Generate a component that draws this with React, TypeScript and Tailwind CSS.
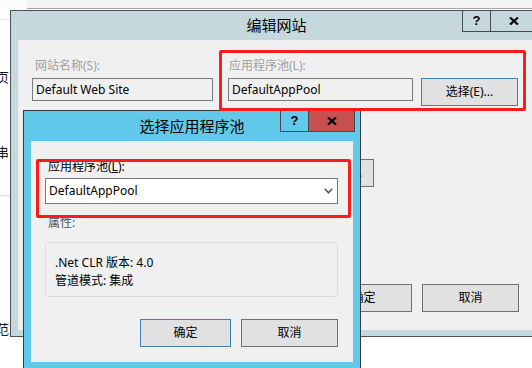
import type { ReactNode } from "react";

const FONT = "font-['Noto_Sans','Noto_Sans_CJK_SC',sans-serif]";

function WinButton({
  children,
  primary,
  className,
}: {
  children?: ReactNode;
  primary?: boolean;
  className?: string;
}) {
  return (
    <div
      className={
        "flex items-center justify-center border bg-[#e1e1e1] text-[12px] text-black " +
        (primary ? "border-[#3c7fb1] " : "border-[#707070] ") +
        (className ?? "")
      }
    >
      {children}
    </div>
  );
}

function CloseGlyph() {
  return (
    <svg width="10" height="8" viewBox="0 0 10 8">
      <path d="M1 0.5 L9 7.5 M9 0.5 L1 7.5" stroke="#000" strokeWidth="2.2" />
    </svg>
  );
}

function CaptionButtons({ red }: { red?: boolean }) {
  return (
    <div className="absolute top-[-1px] right-[5px] flex h-[22px]">
      <div className="flex w-[29px] items-center justify-center border border-t-0 border-[#4a4a4a] font-['Liberation_Sans',sans-serif] text-[13px] font-bold text-black">
        ?
      </div>
      <div
        className={
          "flex w-[46px] items-center justify-center border border-t-0 border-l-0 border-[#4a4a4a] " +
          (red ? "bg-[#c75050]" : "")
        }
      >
        <CloseGlyph />
      </div>
    </div>
  );
}

export default function App() {
  return (
    <div className={"relative h-[368px] w-[532px] overflow-hidden bg-white " + FONT}>
      {/* page behind the dialogs */}
      <div className="flex h-[9px]">
        <div className="w-[27px] bg-[#fbfbfb]" />
        <div className="flex-1 border-b border-[#a6a6a6] bg-[#f3f3f3]" />
      </div>
      <div className="flex w-[10px] flex-col overflow-hidden text-[13px] leading-[16px] text-[#1a1a1a]">
        <div className="mt-[10px] h-px bg-[#dde7eb]" />
        <div className="mt-[49px] -ml-[4px] whitespace-nowrap">页</div>
        <div className="mt-[59px] -ml-[4px] whitespace-nowrap">串</div>
        <div className="mt-[35px] h-px bg-[#d3e2ea]" />
        <div className="mt-[125px] -ml-[4px] whitespace-nowrap">范</div>
      </div>

      {/* 编辑网站 */}
      <div className="absolute left-[10px] top-[10px] flex h-[327px] w-[533px] flex-col border border-[#505050] bg-[#c5d8dd]">
        <div className="relative flex h-[29px] shrink-0 items-center justify-center text-[15px] text-black">
          编辑网站
          <CaptionButtons />
        </div>
        <div className="mx-[7px] mb-[6px] flex flex-1 flex-col bg-[#f0f0f0] pl-[14px] pt-[18px] text-[12px]">
          <div className="flex h-[16px] items-center leading-[16px] text-[#a0a0a0]">
            <div className="w-[196px] pl-[3px]">网站名称(S):</div>
            <div className="pl-[1px]">应用程序池(L):</div>
          </div>
          <div className="mt-[4px] flex items-start">
            <div className="flex h-[23px] w-[181px] items-center border border-[#7a7a7a] bg-[#f0f0f0] pl-[3px] text-black">
              Default Web Site
            </div>
            <div className="ml-[15px] flex h-[23px] w-[185px] items-center border border-[#7a7a7a] bg-[#f0f0f0] pl-[3px] text-black">
              DefaultAppPool
            </div>
            <WinButton primary className="ml-[8px] h-[28px] w-[97px]">
              选择(E)...
            </WinButton>
          </div>
          <WinButton className="ml-[245px] mt-[53px] h-[28px] w-[97px]">测试设置(G)...</WinButton>
          <div className="mt-[97px] flex">
            <WinButton className="ml-[283px] h-[28px] w-[97px]">确定</WinButton>
            <WinButton className="ml-[10px] h-[28px] w-[97px]">取消</WinButton>
          </div>
        </div>
      </div>

      {/* 选择应用程序池 */}
      <div className="absolute left-[23px] top-[110px] flex h-[270px] w-[338px] flex-col border border-[#3a3a3a] bg-[#63c9ea]">
        <div className="relative flex h-[30px] shrink-0 items-center justify-center text-[15px] text-black">
          选择应用程序池
          <CaptionButtons red />
        </div>
        <div className="mx-[7px] flex h-[221px] flex-col bg-[#f0f0f0] pl-[14px] pt-[18px] text-[12px] text-black">
          <div className="pl-[3px] leading-[16px]">
            应用程序池(<span className="underline">L</span>):
          </div>
          <div className="mt-[3px] flex h-[26px] w-[293px] items-center justify-between border border-[#7a7a7a] bg-white pl-[3px] pr-[4px]">
            <span>DefaultAppPool</span>
            <svg width="9" height="6" viewBox="0 0 9 6">
              <path d="M0.8 0.8 L4.5 4.8 L8.2 0.8" fill="none" stroke="#555" strokeWidth="1.6" />
            </svg>
          </div>
          <div className="mt-[11px] pl-[3px] leading-[16px] text-[#555]">属性:</div>
          <div className="mt-[11px] flex h-[55px] w-[293px] flex-col rounded-[3px] border border-[#dcdcdc] px-[9px] pt-[11px] leading-[18px]">
            <div>.Net CLR 版本: 4.0</div>
            <div>管道模式: 集成</div>
          </div>
          <div className="mt-[22px] flex">
            <WinButton primary className="ml-[95px] h-[28px] w-[91px]">
              确定
            </WinButton>
            <WinButton className="ml-[10px] h-[28px] w-[97px]">取消</WinButton>
          </div>
        </div>
      </div>

      {/* red highlight boxes */}
      <div className="pointer-events-none absolute left-[219px] top-[50px] h-[61px] w-[307px] rounded-[2px] border-[3px] border-[#fd1b1b]" />
      <div className="pointer-events-none absolute left-[36px] top-[159px] h-[59px] w-[315px] rounded-[2px] border-[3px] border-[#fd1b1b]" />
    </div>
  );
}
